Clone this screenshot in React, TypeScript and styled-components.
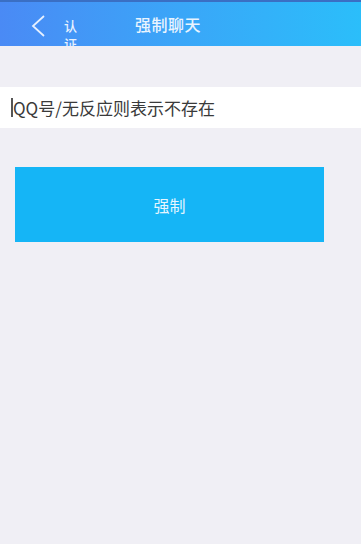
import React from 'react'
import styled, { createGlobalStyle } from 'styled-components'

const GlobalStyle = createGlobalStyle`
  html, body {
    margin: 0;
    padding: 0;
    background: #f0eff5;
  }
  body {
    font-family: "Noto Sans CJK SC", "Noto Sans", sans-serif;
  }
`

const Page = styled.div`
  width: 361px;
  height: 544px;
  background: #f0eff5;
  display: flex;
  flex-direction: column;
  overflow: hidden;
`

const Header = styled.header`
  height: 46px;
  flex-shrink: 0;
  box-sizing: border-box;
  border-top: 2px solid #3a6fc4;
  background: linear-gradient(90deg, #4a8af5 0%, #3aa6f8 50%, #2bbefa 100%);
  display: flex;
  align-items: flex-start;
  overflow: hidden;
`

const BackButton = styled.div`
  width: 30px;
  height: 44px;
  margin-left: 23px;
  padding-top: 4px;
  box-sizing: border-box;
  display: flex;
  align-items: center;
  justify-content: center;
`

const SideLabel = styled.div`
  width: 13px;
  margin-left: 11px;
  padding-top: 15px;
  font-size: 13px;
  line-height: 18px;
  font-weight: 500;
  color: #e8f2ff;
  word-break: break-all;
`

const Title = styled.div`
  margin-left: 58px;
  height: 44px;
  line-height: 44px;
  font-size: 16px;
  font-weight: 500;
  color: #e9f4ff;
  letter-spacing: 0.5px;
`

const InputRow = styled.div`
  margin-top: 41px;
  height: 41px;
  background: #ffffff;
  display: flex;
  align-items: center;
  padding-left: 11px;
`

const Field = styled.input`
  flex: 1;
  border: none;
  outline: none;
  background: transparent;
  font-family: "Noto Sans CJK SC", "Noto Sans", sans-serif;
  font-size: 17px;
  color: #3a3a3a;
  padding: 0;
  &::placeholder {
    color: #3a3a3a;
  }
`

const Cursor = styled.span`
  width: 2px;
  height: 19px;
  background: #555;
`

const SubmitButton = styled.button`
  margin: 39px 0 0 15px;
  width: 309px;
  height: 75px;
  border: none;
  background: #15b5f6;
  color: #e6f6ff;
  font-family: "Noto Sans CJK SC", "Noto Sans", sans-serif;
  font-size: 16px;
  padding: 0;
  cursor: pointer;
`

export default function App() {
  return (
    <>
      <GlobalStyle />
      <Page>
        <Header>
          <BackButton>
            <svg width="14" height="22" viewBox="0 0 14 22">
              <path d="M13 1 L2 11 L13 21" fill="none" stroke="#e6f0ff" strokeWidth="1.8" />
            </svg>
          </BackButton>
          <SideLabel>认证</SideLabel>
          <Title>强制聊天</Title>
        </Header>
        <InputRow>
          <Cursor />
          <Field placeholder="QQ号/无反应则表示不存在" />
        </InputRow>
        <SubmitButton>强制</SubmitButton>
      </Page>
    </>
  )
}
